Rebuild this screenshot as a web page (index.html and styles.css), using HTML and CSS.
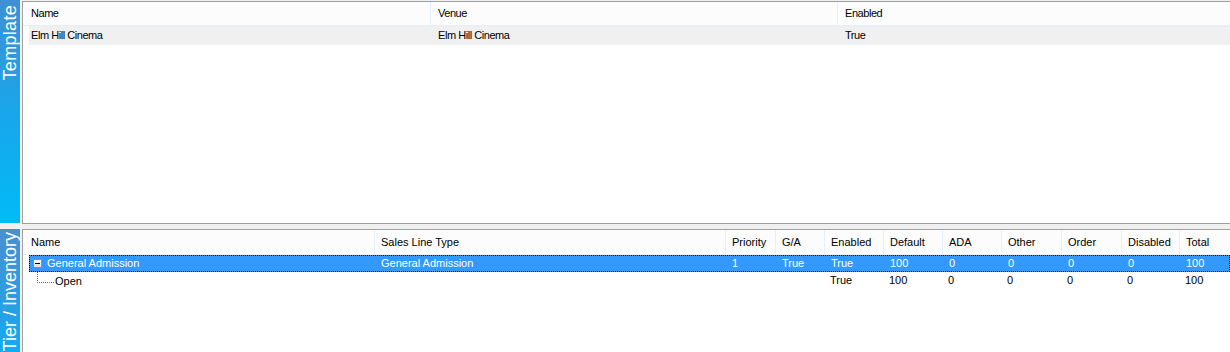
FILE: index.html
```html
<!DOCTYPE html>
<html>
<head>
<meta charset="utf-8">
<link rel="stylesheet" href="styles.css">
</head>
<body>
<div class="app">
  <div class="tabs">
    <div class="tab tab-top"><span class="tab-label">Template</span></div>
    <div class="tab tab-bottom"><span class="tab-label">Tier / Inventory</span></div>
  </div>
  <div class="panels">
    <div class="panel panel-top">
      <div class="t-head">
        <div class="hc first">Name</div>
        <div class="hc">Venue</div>
        <div class="hc last">Enabled</div>
      </div>
      <div class="t-row">
        <div class="rc first">Elm Hill Cinema</div>
        <div class="rc">Elm Hill Cinema</div>
        <div class="rc">True</div>
      </div>
    </div>
    <div class="panel panel-bottom">
      <div class="b-head">
        <div class="bh first">Name</div>
        <div class="bh">Sales Line Type</div>
        <div class="bh">Priority</div>
        <div class="bh">G/A</div>
        <div class="bh">Enabled</div>
        <div class="bh">Default</div>
        <div class="bh">ADA</div>
        <div class="bh">Other</div>
        <div class="bh">Order</div>
        <div class="bh">Disabled</div>
        <div class="bh last">Total</div>
      </div>
      <div class="b-row selected">
        <div class="bc name"><span class="minus"></span><span class="name-text">General Admission</span></div>
        <div class="bc">General Admission</div>
        <div class="bc">1</div>
        <div class="bc">True</div>
        <div class="bc">True</div>
        <div class="bc">100</div>
        <div class="bc">0</div>
        <div class="bc">0</div>
        <div class="bc">0</div>
        <div class="bc">0</div>
        <div class="bc">100</div>
      </div>
      <div class="b-row">
        <div class="bc name child"><span class="tree-line"></span><span class="name-text">Open</span></div>
        <div class="bc"></div>
        <div class="bc"></div>
        <div class="bc"></div>
        <div class="bc">True</div>
        <div class="bc">100</div>
        <div class="bc">0</div>
        <div class="bc">0</div>
        <div class="bc">0</div>
        <div class="bc">0</div>
        <div class="bc">100</div>
      </div>
    </div>
  </div>
</div>
</body>
</html>
```

FILE: styles.css
```css
* { box-sizing: border-box; }
html, body { margin: 0; padding: 0; }
body {
  background: #f0f0f0;
  font-family: "Liberation Sans", Arial, sans-serif;
  font-size: 11px;
  color: #000;
}
.app {
  display: flex;
  gap: 2px;
  height: 352px;
  width: 1230px;
  overflow: hidden;
}
.tabs {
  width: 20px;
  flex: none;
  display: flex;
  flex-direction: column;
  gap: 6px;
}
.tab {
  display: flex;
  flex-direction: column;
  align-items: center;
  color: #fff;
  font-size: 18px;
  overflow: hidden;
}
.tab-top {
  height: 223px;
  flex: none;
  padding-top: 5px;
  background: linear-gradient(to bottom, #3f8fd3 0%, #1aa6ea 50%, #00bbf7 100%);
}
.tab-bottom {
  flex: 1;
  padding-top: 3px;
  background: linear-gradient(to bottom, #4a8fd0 0%, #2a9ee3 60%, #12abf0 100%);
}
.tab-label {
  writing-mode: vertical-rl;
  transform: rotate(180deg);
  white-space: nowrap;
  line-height: 20px;
}
.tab-top .tab-label { letter-spacing: 0.3px; }
.panels {
  flex: 1;
  display: flex;
  flex-direction: column;
  gap: 5px;
  padding-top: 1px;
}
.panel {
  background: #fff;
  border: 1px solid #a0a0a0;
  border-right: none;
}
.panel-top {
  height: 223px;
  flex: none;
}
.panel-bottom {
  flex: 1;
  border-bottom: none;
}

/* top grid */
.t-head {
  display: grid;
  grid-template-columns: 408px 407px 1fr;
  height: 24px;
  background: #fcfcfc;
  border-bottom: 1px solid #e6eef8;
  letter-spacing: -0.45px;
}
.hc {
  padding-left: 7px;
  line-height: 23px;
  border-right: 1px solid #e6eef8;
}
.hc.first { padding-left: 8px; }
.hc.last { border-right: none; }
.t-row {
  display: grid;
  grid-template-columns: 402px 407px 1fr;
  margin-left: 6px;
  height: 19px;
  background: #f0f0f0;
  letter-spacing: -0.45px;
}
.rc {
  padding-left: 7px;
  line-height: 19px;
}
.rc.first { padding-left: 2px; }

/* bottom grid */
.b-head, .b-row {
  display: grid;
}
.b-head {
  grid-template-columns: 352px 351px 50px 49px 59px 59px 59px 60px 60px 58px 1fr;
  height: 25px;
  background: #fcfcfc;
  border-bottom: 1px solid #edf2f9;
}
.bh {
  padding-left: 6px;
  line-height: 24px;
  border-right: 1px solid #e6eef8;
  white-space: nowrap;
}
.bh.first { padding-left: 8px; }
.bh.last { border-right: none; }
.b-row {
  grid-template-columns: 346px 351px 50px 49px 59px 59px 59px 60px 60px 58px 1fr;
  margin-left: 6px;
  height: 18px;
}
.b-row.selected {
  height: 17px;
  background: #3399ff;
  color: #fff;
  border: 1px dotted #000;
}
.bc {
  padding-left: 5px;
  line-height: 17px;
  white-space: nowrap;
}
.b-row.selected .bc { line-height: 15px; }
.b-row.selected .bc:first-child { padding-left: 3px; }
.bc.name {
  display: flex;
  align-items: center;
  padding-left: 4px;
}
.minus {
  width: 9px;
  height: 9px;
  border: 1px solid #8f8f8f;
  background: linear-gradient(to bottom, #ffffff, #dcdcdc);
  position: relative;
  flex: none;
  margin-right: 5px;
}
.minus::after {
  content: "";
  position: absolute;
  left: 1px;
  top: 3px;
  width: 5px;
  height: 1px;
  background: #000;
}
.bc.child {
  padding-left: 8px;
  position: relative;
}
.tree-line {
  width: 17px;
  height: 11px;
  flex: none;
  align-self: flex-start;
  border-left: 1px dotted #707070;
  border-bottom: 1px dotted #707070;
  margin-right: 1px;
}
```
